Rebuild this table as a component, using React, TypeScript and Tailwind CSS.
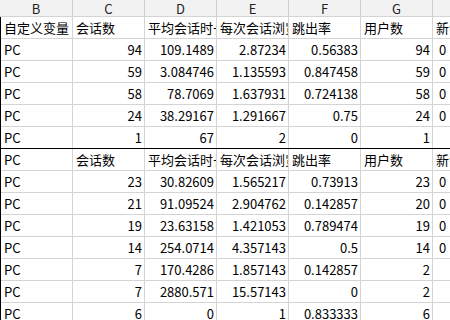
import React from "react";

const cols = ["B", "C", "D", "E", "F", "G", ""];

const hdr = ["会话数", "平均会话时长", "每次会话浏览页数", "跳出率", "用户数", "新会话百分比"];

const rows: (string | number)[][] = [
  ["自定义变量", ...hdr],
  ["PC", 94, "109.1489", "2.87234", "0.56383", 94, "0"],
  ["PC", 59, "3.084746", "1.135593", "0.847458", 59, "0"],
  ["PC", 58, "78.7069", "1.637931", "0.724138", 58, "0"],
  ["PC", 24, "38.29167", "1.291667", "0.75", 24, "0"],
  ["PC", 1, "67", "2", "0", 1, ""],
  ["PC", ...hdr],
  ["PC", 23, "30.82609", "1.565217", "0.73913", 23, "0"],
  ["PC", 21, "91.09524", "2.904762", "0.142857", 20, "0"],
  ["PC", 19, "23.63158", "1.421053", "0.789474", 19, "0"],
  ["PC", 14, "254.0714", "4.357143", "0.5", 14, "0"],
  ["PC", 7, "170.4286", "1.857143", "0.142857", 2, ""],
  ["PC", 7, "2880.571", "15.57143", "0", 2, ""],
  ["PC", 6, "0", "1", "0.833333", 6, ""],
];

const isNum = (v: string | number) =>
  typeof v === "number" || /^[0-9.]+$/.test(v);

export default function App() {
  return (
    <div
      className="w-[450px] h-[320px] overflow-hidden bg-white text-[13px] text-black"
      style={{ fontFamily: '"Noto Sans CJK SC", "Noto Sans", sans-serif' }}
    >
      <div className="flex h-[17px] bg-[#f2f2f2] border-b border-[#d4d4d4] text-[13px] text-[#222]">
        {cols.map((c, i) => (
          <div
            key={i}
            className={
              i === 6
                ? "flex-1 flex items-center justify-center leading-none"
                : i === 0
                ? "w-[73px] shrink-0 flex items-center justify-center leading-none border-r border-[#cfcfcf]"
                : "w-[72px] shrink-0 flex items-center justify-center leading-none border-r border-[#cfcfcf]"
            }
          >
            {c}
          </div>
        ))}
      </div>
      <div className="border-l border-black">
        {rows.map((r, ri) => (
          <div
            key={ri}
            className={
              ri === 5
                ? "flex h-[22px] border-b border-black"
                : "flex h-[22px] border-b border-[#d4d4d4]"
            }
          >
            {r.map((v, ci) => {
              const num = isNum(v);
              const last = ci === 6;
              return (
                <div
                  key={ci}
                  className={
                    (last
                      ? "flex-1 min-w-0 "
                      : "w-[72px] shrink-0 border-r border-[#d4d4d4] ") +
                    "overflow-hidden whitespace-nowrap leading-[21px] " +
                    (last
                      ? num
                        ? "text-left pl-[6px]"
                        : "text-left pl-[3px]"
                      : num
                      ? "text-right pr-[2px]"
                      : "text-left pl-[3px]")
                  }
                >
                  {v}
                </div>
              );
            })}
          </div>
        ))}
      </div>
    </div>
  );
}
